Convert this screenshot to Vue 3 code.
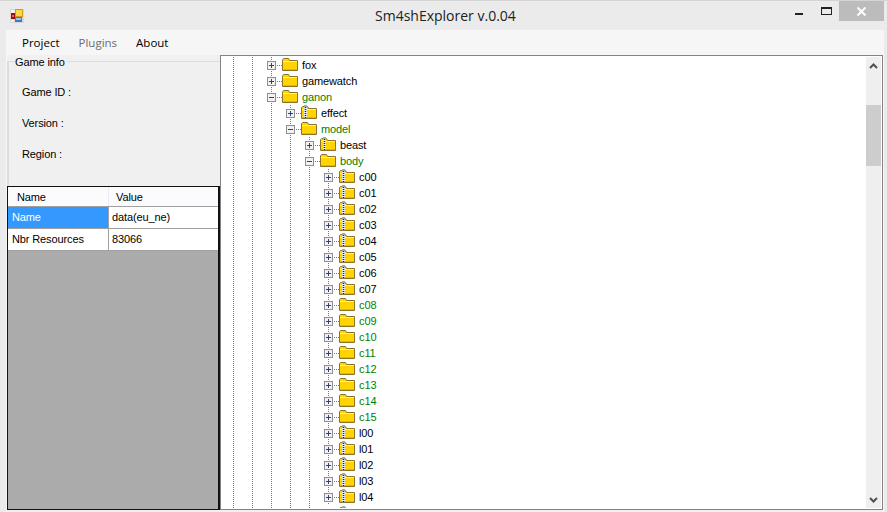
<script setup>
const zipped = (names, depth) =>
  names.map((name) => ({ name, depth, color: "", zip: true, state: "plus" }));
const plain = (names, depth, color) =>
  names.map((name) => ({ name, depth, color, zip: false, state: "plus" }));

const rows = [
  { name: "fox", depth: 0, color: "", zip: false, state: "plus" },
  { name: "gamewatch", depth: 0, color: "", zip: false, state: "plus" },
  { name: "ganon", depth: 0, color: "green", zip: false, state: "minus" },
  { name: "effect", depth: 1, color: "", zip: true, state: "plus" },
  { name: "model", depth: 1, color: "green", zip: false, state: "minus" },
  { name: "beast", depth: 2, color: "", zip: true, state: "plus" },
  { name: "body", depth: 2, color: "green", zip: false, state: "minus" },
  ...zipped(["c00", "c01", "c02", "c03", "c04", "c05", "c06", "c07"], 3),
  ...plain(["c08", "c09", "c10", "c11", "c12", "c13", "c14", "c15"], 3, "green"),
  ...zipped(["l00", "l01", "l02", "l03", "l04"], 3),
];
</script>

<template>
  <div class="window">
    <header class="titlebar">
      <svg class="appicon" width="16" height="16" viewBox="0 0 16 16">
        <rect x="1" y="1" width="14" height="14" fill="#d8d8d8" />
        <rect x="2" y="2" width="4" height="3" fill="#f4f4f4" />
        <rect x="6" y="1" width="8" height="8" fill="#d89a10" />
        <rect x="7" y="2" width="6" height="6" fill="#ffd84a" />
        <rect x="2" y="5" width="4" height="6" fill="#9c1010" />
        <rect x="3" y="7" width="2" height="2" fill="#e86060" />
        <rect x="6" y="9" width="7" height="5" fill="#3a78d8" />
        <rect x="7" y="10" width="5" height="2" fill="#9cc4f4" />
        <rect x="2" y="12" width="3" height="2" fill="#f4f4f4" />
      </svg>
      <span class="title">Sm4shExplorer v.0.04</span>
      <div class="controls">
        <span class="min"></span>
        <span class="max"></span>
        <span class="close">
          <svg width="11" height="9" viewBox="0 0 11 9">
            <path d="M1.5 .5 L9.5 8.5 M9.5 .5 L1.5 8.5" stroke="#fff" stroke-width="2" fill="none" />
          </svg>
        </span>
      </div>
    </header>

    <div class="client">
      <nav class="menu">
        <span>Project</span>
        <span class="off">Plugins</span>
        <span>About</span>
      </nav>

      <div class="main">
        <aside class="side">
          <section class="group">
            <div class="legend">Game info</div>
            <p>Game ID :</p>
            <p>Version :</p>
            <p>Region :</p>
          </section>

          <div class="grid">
            <div class="row head">
              <div class="c1">Name</div>
              <div class="c2">Value</div>
            </div>
            <div class="row">
              <div class="c1 sel">Name</div>
              <div class="c2">data(eu_ne)</div>
            </div>
            <div class="row">
              <div class="c1">Nbr Resources</div>
              <div class="c2">83066</div>
            </div>
          </div>
        </aside>

        <div class="tree">
          <div class="list">
            <div class="node" v-for="r in rows" :key="r.name">
              <span class="guide" v-for="g in r.depth + 2" :key="g"></span>
              <span class="exp">
                <span class="box">
                  <svg width="9" height="9" viewBox="0 0 9 9">
                    <rect x=".5" y=".5" width="8" height="8" fill="#f2f2f2" stroke="#8e8e8e" />
                    <path d="M2 4.5 H7" stroke="#2f4080" />
                    <path v-if="r.state === 'plus'" d="M4.5 2 V7" stroke="#2f4080" />
                  </svg>
                </span>
              </span>
              <svg class="folder" width="16" height="14" viewBox="0 0 16 14">
                <path d="M.5 13.5 V2.5 L1.5 1.5 H6.5 L7.5 3.5 H15.5 V13.5 Z" fill="#ffd400" stroke="#8a7430" />
                <path d="M1 4.5 H15" stroke="#fff0a0" />
                <path d="M1 12.5 H15" stroke="#f4b000" />
                <g v-if="r.zip">
                  <rect x="3" y="0" width="3" height="13" fill="#efefef" />
                  <rect x="3" y="0" width="3" height="2" fill="#a8a8a8" />
                  <path d="M4.5 2 V13" stroke="#222" stroke-width="1.6" stroke-dasharray="1 1" />
                </g>
              </svg>
              <span class="label" :class="r.color">{{ r.name }}</span>
            </div>
            <div class="node cut">
              <span class="guide" v-for="g in 5" :key="g"></span>
              <span class="exp"></span>
              <svg class="folder" width="16" height="14" viewBox="0 0 16 14">
                <path d="M.5 13.5 V2.5 L1.5 1.5 H6.5 L7.5 3.5 H15.5 V13.5 Z" fill="#ffd400" stroke="#8a7430" />
                <rect x="3" y="0" width="3" height="3" fill="#a8a8a8" />
              </svg>
            </div>
          </div>

          <div class="scroll">
            <div class="btn">
              <svg width="9" height="6" viewBox="0 0 9 6">
                <path d="M1 5 L4.5 1.5 L8 5" stroke="#505050" stroke-width="2" fill="none" />
              </svg>
            </div>
            <div class="gap"></div>
            <div class="thumb"></div>
            <div class="rest"></div>
            <div class="btn">
              <svg width="9" height="6" viewBox="0 0 9 6">
                <path d="M1 1 L4.5 4.5 L8 1" stroke="#505050" stroke-width="2" fill="none" />
              </svg>
            </div>
          </div>
        </div>
      </div>
    </div>
  </div>
</template>

<style scoped>
.window {
  width: 887px;
  height: 512px;
  display: flex;
  flex-direction: column;
  overflow: hidden;
  background: #ebebeb;
  border-top: 1px solid #d4d4d4;
  box-sizing: border-box;
  font-family: "Liberation Sans", Arial, sans-serif;
  font-size: 11px;
  letter-spacing: -0.12px;
  color: #000;
}

.titlebar {
  height: 29px;
  flex: none;
  display: flex;
  align-items: flex-start;
  position: relative;
  letter-spacing: 0;
}

.appicon {
  margin: 7px 0 0 9px;
}

.title {
  position: absolute;
  left: 375px;
  top: 6px;
  font-family: "Open Sans", sans-serif;
  font-size: 14px;
  line-height: 18px;
  color: #222;
}

.controls {
  margin-left: auto;
  margin-right: 3px;
  display: flex;
  align-items: flex-start;
}

.min {
  width: 8px;
  height: 2px;
  margin-top: 12px;
  background: #222;
}

.max {
  width: 11px;
  height: 8px;
  box-sizing: border-box;
  margin: 6px 0 0 18px;
  border: 1px solid #222;
  border-top-width: 2px;
}

.close {
  width: 45px;
  height: 20px;
  margin-left: 7px;
  background: #bcbcbc;
  display: flex;
  align-items: center;
  justify-content: center;
}

.client {
  flex: 1;
  min-height: 0;
  margin: 0 3px 0 6px;
  border: 1px solid #f7f7f7;
  border-bottom: 0;
  background: #f0f0f0;
  display: flex;
  flex-direction: column;
}

.menu {
  height: 24px;
  flex: none;
  box-sizing: border-box;
  padding: 0 0 2px 15px;
  display: flex;
  align-items: center;
  gap: 19px;
  background: #f6f6f6;
  font-family: "Open Sans", sans-serif;
  font-size: 11.5px;
  font-weight: 500;
  letter-spacing: 0;
  color: #000;
}

.menu .off {
  color: #6d6d6d;
}

.main {
  flex: 1;
  min-height: 0;
  display: flex;
}

.side {
  width: 213px;
  flex: none;
  display: flex;
  flex-direction: column;
  margin-bottom: 2px;
}

.group {
  height: 125px;
  flex: none;
  margin-top: 6px;
  border-top: 1px solid #dcdcdc;
  border-left: 2px solid #dcdcdc;
  box-sizing: border-box;
  padding-left: 13px;
}

.legend {
  margin: -7px 0 0 -7px;
  width: fit-content;
  padding: 0 2px 0 0;
  line-height: 14px;
  background: #f0f0f0;
}

.group p {
  margin: 0;
  line-height: 14px;
  height: 31px;
}

.group .legend + p {
  margin-top: 16px;
}

.grid {
  flex: 1;
  min-height: 0;
  border: 1px solid #111;
  border-right-width: 2px;
  background: #ababab;
}

.row {
  display: flex;
  height: 22px;
  background: #fff;
  border-bottom: 1px solid #a0a0a0;
  box-sizing: border-box;
  line-height: 21px;
}

.row .c1 {
  width: 101px;
  flex: none;
  box-sizing: border-box;
  padding-left: 4px;
  border-right: 1px solid #a0a0a0;
}

.row .c2 {
  flex: 1;
  padding-left: 3px;
}

.row .sel {
  background: #3399ff;
  color: #fff;
}

.row.head {
  height: 20px;
  background: #fbfbfd;
  line-height: 20px;
}

.row.head .c1 {
  padding-left: 9px;
  border-right-color: #e8eef8;
}

.row.head .c2 {
  padding-left: 7px;
}

.tree {
  flex: 1;
  min-width: 0;
  display: flex;
  margin-bottom: 2px;
  background: #fff;
  border: 1px solid #828287;
  padding: 1px;
  box-sizing: border-box;
}

.list {
  flex: 1;
  min-width: 0;
  overflow: hidden;
  padding-left: 2px;
}

.node {
  height: 16px;
  display: flex;
  align-items: center;
}

.guide {
  width: 19px;
  height: 16px;
  flex: none;
  background: repeating-linear-gradient(to bottom, #777 0 1px, transparent 1px 2px) 9px 0 / 1px 100% no-repeat;
}

.exp {
  width: 20px;
  height: 16px;
  flex: none;
  display: flex;
  align-items: center;
  background:
    repeating-linear-gradient(to bottom, #777 0 1px, transparent 1px 2px) 9px 0 / 1px 100% no-repeat,
    repeating-linear-gradient(to right, #777 0 1px, transparent 1px 2px) 9px 8px / 11px 1px no-repeat;
}

.box {
  display: block;
  height: 9px;
  margin-left: 5px;
  line-height: 0;
}

.folder {
  flex: none;
  margin-bottom: 2px;
}

.cut {
  align-items: flex-start;
}

.cut .folder {
  margin-top: 1px;
}

.cut .exp {
  background: none;
}

.label {
  margin-left: 4px;
  line-height: 16px;
  white-space: nowrap;
}

.label.green {
  color: #008000;
}

.scroll {
  width: 15px;
  flex: none;
  margin-left: 1px;
  display: flex;
  flex-direction: column;
  background: #efefef;
}

.btn {
  height: 17px;
  flex: none;
  display: flex;
  align-items: center;
  justify-content: center;
}

.gap {
  height: 31px;
  flex: none;
}

.thumb {
  height: 61px;
  flex: none;
  background: #cdcdcd;
}

.rest {
  flex: 1;
}
</style>

<style>
html,
body {
  margin: 0;
  background: #ebebeb;
}
</style>
